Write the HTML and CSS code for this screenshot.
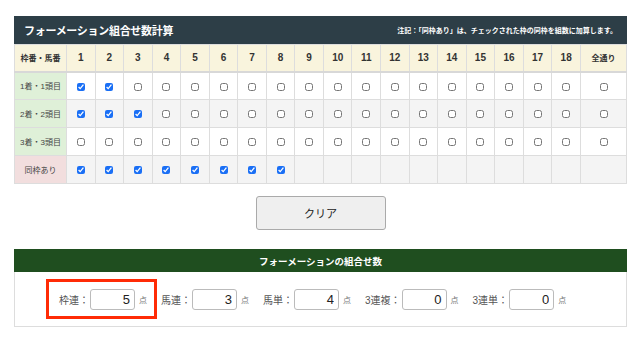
FILE: index.html
```html
<!DOCTYPE html>
<html lang="ja">
<head>
<meta charset="utf-8">
<title>フォーメーション組合せ数計算</title>
<link rel="stylesheet" href="styles.css">
</head>
<body>
<div class="wrap">
  <div class="titlebar">
    <span class="title">フォーメーション組合せ数計算</span>
    <span class="note">注記：「同枠あり」は、チェックされた枠の同枠を組数に加算します。</span>
  </div>
  <table class="grid">
    <colgroup>
      <col class="c-first">
      <col><col><col><col><col><col><col><col><col>
      <col><col><col><col><col><col><col><col><col>
      <col class="c-last">
    </colgroup>
    <thead>
      <tr>
        <th class="small">枠番・馬番</th>
        <th>1</th><th>2</th><th>3</th><th>4</th><th>5</th><th>6</th><th>7</th><th>8</th><th>9</th>
        <th>10</th><th>11</th><th>12</th><th>13</th><th>14</th><th>15</th><th>16</th><th>17</th><th>18</th>
        <th class="small">全通り</th>
      </tr>
    </thead>
    <tbody>
      <tr class="odd">
        <td class="lbl green">1着・1頭目</td>
        <td><input type="checkbox" checked></td><td><input type="checkbox" checked></td><td><input type="checkbox"></td><td><input type="checkbox"></td><td><input type="checkbox"></td><td><input type="checkbox"></td><td><input type="checkbox"></td><td><input type="checkbox"></td><td><input type="checkbox"></td>
        <td><input type="checkbox"></td><td><input type="checkbox"></td><td><input type="checkbox"></td><td><input type="checkbox"></td><td><input type="checkbox"></td><td><input type="checkbox"></td><td><input type="checkbox"></td><td><input type="checkbox"></td><td><input type="checkbox"></td>
        <td><input type="checkbox"></td>
      </tr>
      <tr class="even">
        <td class="lbl green">2着・2頭目</td>
        <td><input type="checkbox" checked></td><td><input type="checkbox" checked></td><td><input type="checkbox" checked></td><td><input type="checkbox"></td><td><input type="checkbox"></td><td><input type="checkbox"></td><td><input type="checkbox"></td><td><input type="checkbox"></td><td><input type="checkbox"></td>
        <td><input type="checkbox"></td><td><input type="checkbox"></td><td><input type="checkbox"></td><td><input type="checkbox"></td><td><input type="checkbox"></td><td><input type="checkbox"></td><td><input type="checkbox"></td><td><input type="checkbox"></td><td><input type="checkbox"></td>
        <td><input type="checkbox"></td>
      </tr>
      <tr class="odd">
        <td class="lbl green">3着・3頭目</td>
        <td><input type="checkbox"></td><td><input type="checkbox"></td><td><input type="checkbox"></td><td><input type="checkbox"></td><td><input type="checkbox"></td><td><input type="checkbox"></td><td><input type="checkbox"></td><td><input type="checkbox"></td><td><input type="checkbox"></td>
        <td><input type="checkbox"></td><td><input type="checkbox"></td><td><input type="checkbox"></td><td><input type="checkbox"></td><td><input type="checkbox"></td><td><input type="checkbox"></td><td><input type="checkbox"></td><td><input type="checkbox"></td><td><input type="checkbox"></td>
        <td><input type="checkbox"></td>
      </tr>
      <tr class="even">
        <td class="lbl pink">同枠あり</td>
        <td><input type="checkbox" checked></td><td><input type="checkbox" checked></td><td><input type="checkbox" checked></td><td><input type="checkbox" checked></td><td><input type="checkbox" checked></td><td><input type="checkbox" checked></td><td><input type="checkbox" checked></td><td><input type="checkbox" checked></td>
        <td></td><td></td><td></td><td></td><td></td><td></td><td></td><td></td><td></td><td></td><td></td>
      </tr>
    </tbody>
  </table>

  <div class="actions">
    <button class="clear" type="button">クリア</button>
  </div>

  <div class="resultbar">フォーメーションの組合せ数</div>
  <div class="results">
    <div class="item marked">
      <span class="label">枠連：</span><input class="num" type="text" value="5" readonly><span class="unit">点</span>
    </div>
    <div class="item">
      <span class="label">馬連：</span><input class="num" type="text" value="3" readonly><span class="unit">点</span>
    </div>
    <div class="item">
      <span class="label">馬単：</span><input class="num" type="text" value="4" readonly><span class="unit">点</span>
    </div>
    <div class="item">
      <span class="label">3連複：</span><input class="num" type="text" value="0" readonly><span class="unit">点</span>
    </div>
    <div class="item">
      <span class="label">3連単：</span><input class="num" type="text" value="0" readonly><span class="unit">点</span>
    </div>
  </div>
</div>
</body>
</html>
```
FILE: styles.css
```css
* { box-sizing: border-box; }

body {
  margin: 0;
  background: #fff;
  font-family: "Liberation Sans", "Noto Sans CJK JP", sans-serif;
  color: #333;
}

.wrap {
  width: 613px;
  margin: 16px 0 0 14px;
}

.titlebar {
  height: 28px;
  background: #2d3e47;
  display: flex;
  align-items: center;
  justify-content: space-between;
  padding: 0 10px 0 10px;
  color: #fff;
  font-weight: bold;
}

.title {
  font-size: 11px;
  letter-spacing: -0.3px;
}

.note {
  font-size: 7px;
}

.grid {
  width: 613px;
  border-collapse: collapse;
  table-layout: fixed;
}

.c-first { width: 52px; }
.c-last { width: 46px; }

.grid th,
.grid td {
  border: 1px solid #ddd;
  text-align: center;
  vertical-align: middle;
  padding: 0;
}

.grid th {
  height: 27px;
  background: #f9f4dd;
  font-size: 10px;
  font-weight: bold;
  color: #333;
  border-bottom: 2px solid #d8d8d8;
}

.grid th.small {
  font-size: 8px;
}

.grid td {
  height: 28px;
}

.grid tr.odd td { background: #fff; }
.grid tr.even td { background: #f4f4f4; }

.grid td.lbl {
  font-size: 8px;
  color: #444;
}

.grid tr td.green { background: #dff0d8; }
.grid tr td.pink { background: #f2dede; }

.grid input[type="checkbox"] {
  width: 8px;
  height: 8px;
  margin: 0;
  accent-color: #1a6ff5;
  vertical-align: middle;
}

.actions {
  display: flex;
  justify-content: center;
  margin-top: 12px;
}

.clear {
  width: 130px;
  height: 34px;
  background: #efefef;
  border: 1px solid #aaa;
  border-radius: 3px;
  font-family: "Liberation Sans", "Noto Sans CJK JP", sans-serif;
  font-size: 11px;
  color: #222;
}

.resultbar {
  margin-top: 19px;
  height: 23px;
  background: #1f4e1f;
  color: #fff;
  font-weight: bold;
  font-size: 9.5px;
  display: flex;
  align-items: center;
  justify-content: center;
}

.results {
  height: 55px;
  border: 1px solid #ddd;
  border-top: none;
  display: flex;
  align-items: center;
  padding-left: 44px;
}

.item {
  display: flex;
  align-items: center;
  margin-right: 14px;
  position: relative;
}

.label {
  font-size: 10px;
  color: #555;
  margin-right: 1px;
}

.num {
  width: 45px;
  height: 21px;
  border: 1px solid #bbb;
  border-radius: 3px;
  font-family: "Liberation Sans", "Noto Sans CJK JP", sans-serif;
  font-size: 13px;
  color: #222;
  text-align: right;
  padding: 0 4px 0 0;
  background: #fff;
}

.unit {
  font-size: 8px;
  color: #777;
  margin-left: 4px;
}

.item.marked::after {
  content: "";
  position: absolute;
  top: -10px;
  bottom: -9px;
  left: -13px;
  right: -10px;
  border: 3px solid #ff2b06;
  pointer-events: none;
}
```
